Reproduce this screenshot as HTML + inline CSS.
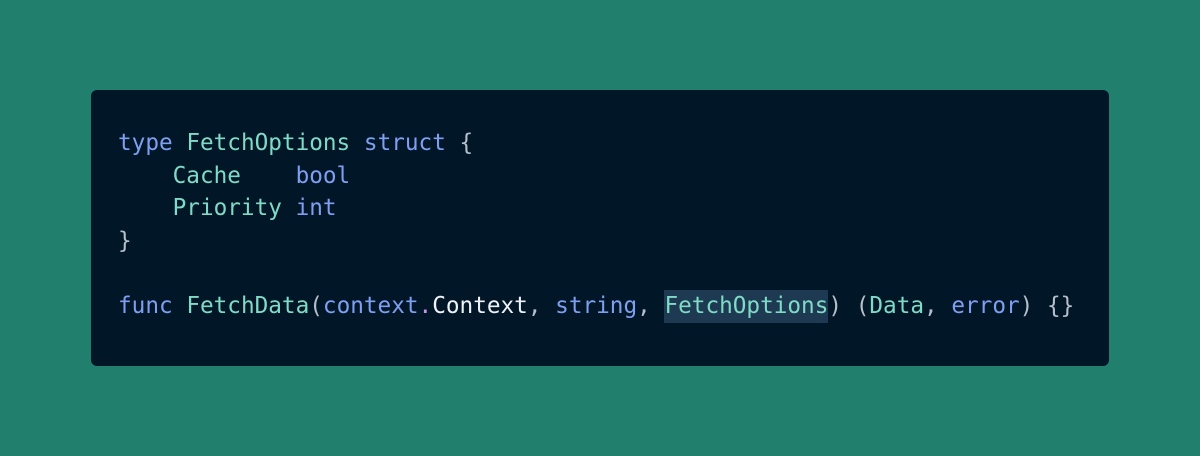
<!DOCTYPE html>
<html><head><style>
html,body{margin:0;padding:0}
body{width:1200px;height:456px;background:#21806d;position:relative;overflow:hidden}
.box{position:absolute;left:91px;top:90px;width:1018px;height:276px;background:#011627;border-radius:6px}
pre{position:absolute;left:118px;top:127px;margin:0;font-family:"DejaVu Sans Mono","Liberation Mono",monospace;font-size:22.7px;line-height:32.5px;color:#b6bfcc;letter-spacing:0px}
.k{color:#7e9ff2}.t{color:#7fdbc6}.w{color:#eef2f6}.d{color:#c792ea}
.h{background:#1e3a52;padding:3px 0 4px}
</style></head><body>
<div class="box"></div>
<pre><span class="k">type</span> <span class="t">FetchOptions</span> <span class="k">struct</span> {
    <span class="t">Cache</span>    <span class="k">bool</span>
    <span class="t">Priority</span> <span class="k">int</span>
}

<span class="k">func</span> <span class="t">FetchData</span>(<span class="k">context</span><span class="d">.</span><span class="w">Context</span>, <span class="k">string</span>, <span class="t h">FetchOptions</span>) (<span class="t">Data</span>, <span class="k">error</span>) {}</pre>
</body></html>
